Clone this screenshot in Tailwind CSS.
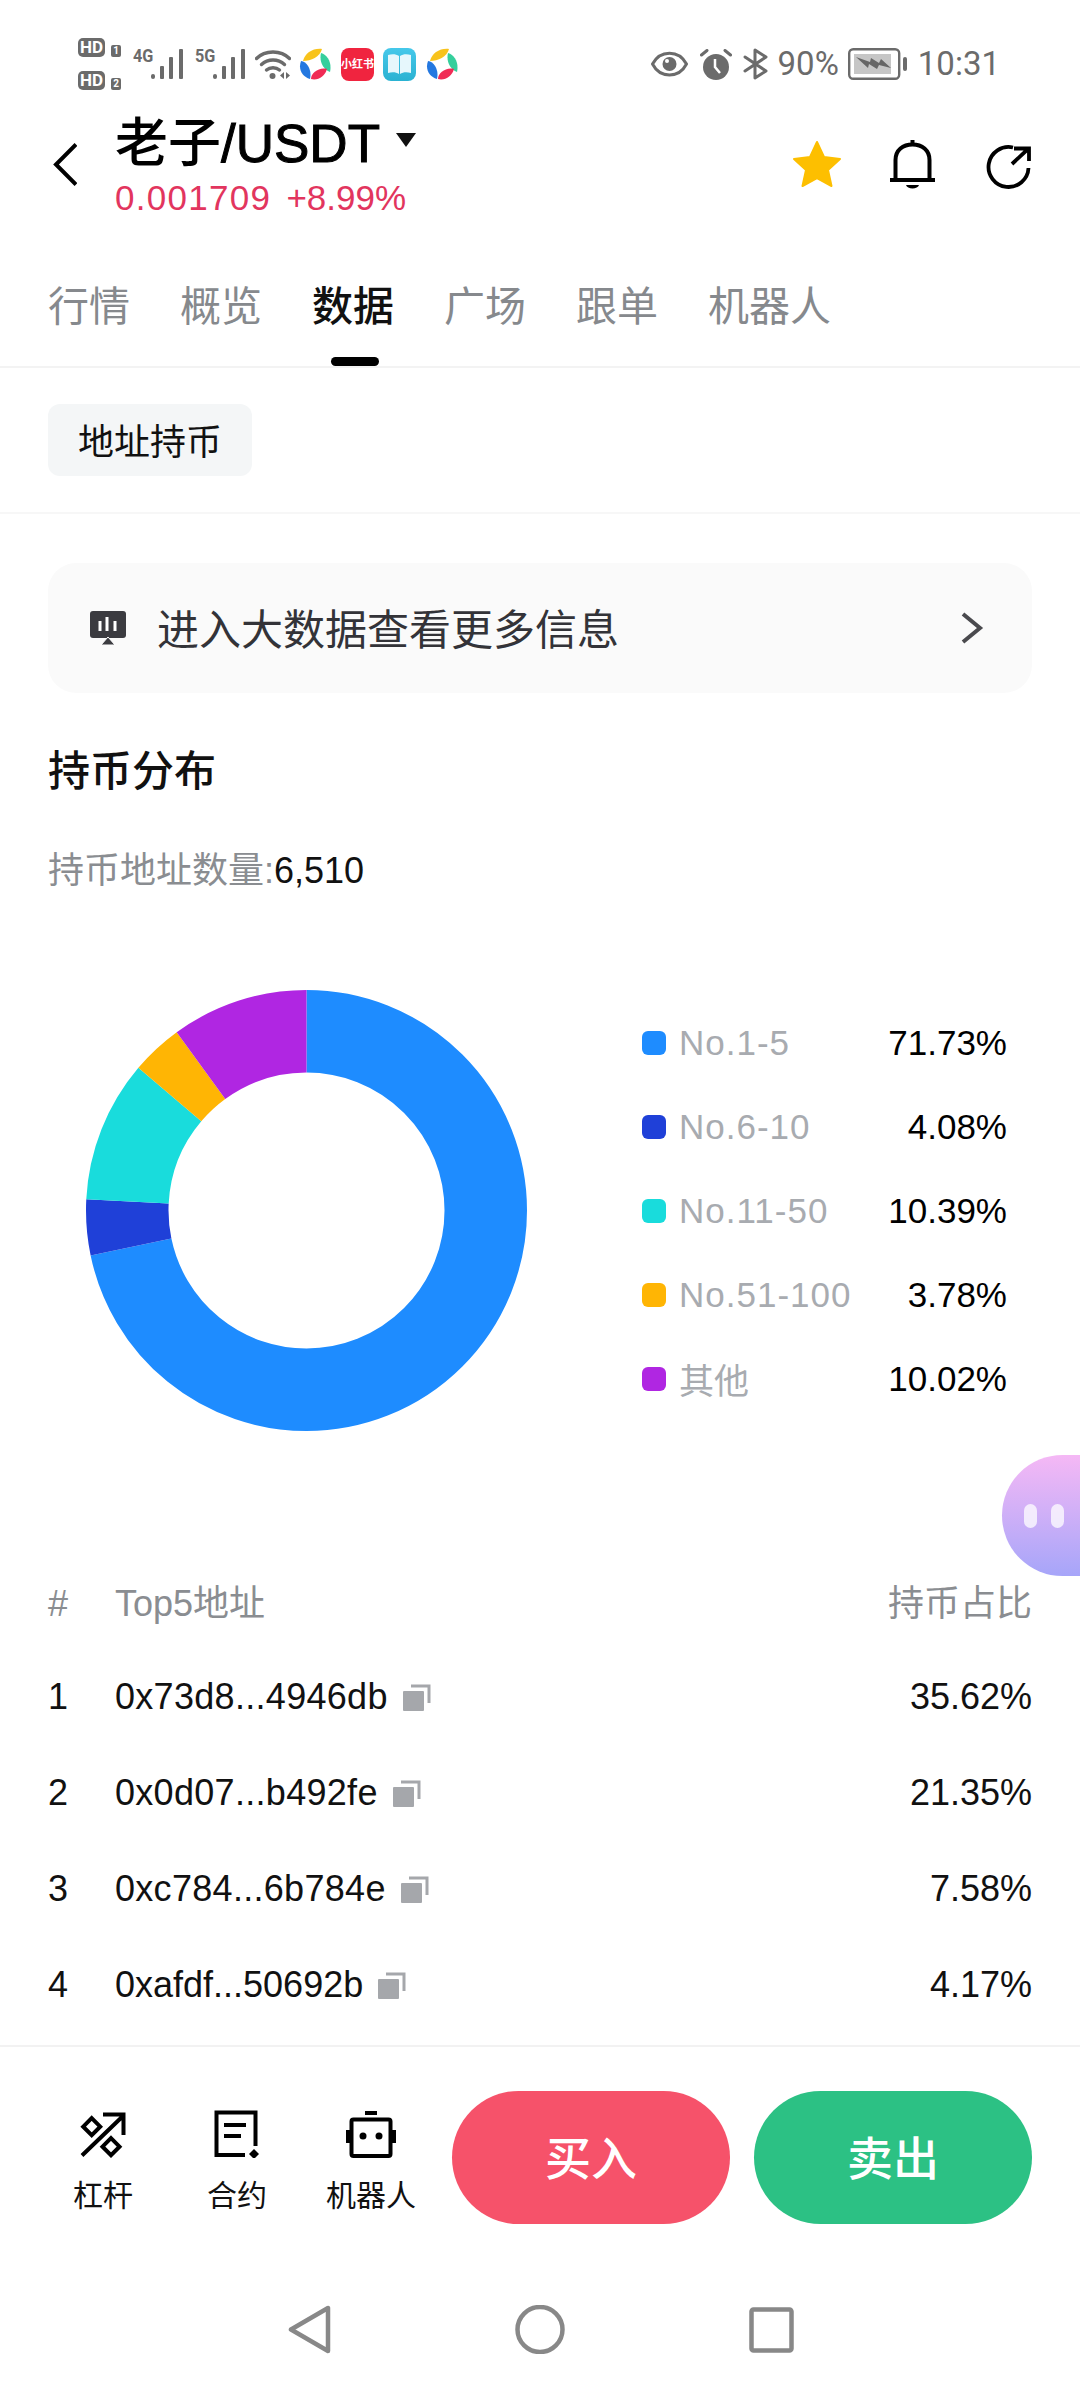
<!DOCTYPE html>
<html lang="zh-CN">
<head>
    <meta charset="UTF-8">
    <meta name="viewport" content="width=device-width, initial-scale=1.0">
    <title>老子/USDT - 数据</title>
    <script src="https://cdn.jsdelivr.net/npm/@tailwindcss/browser@4"></script>
</head>
<body class="bg-white">
<div class="relative w-[1080px] h-[2388px] overflow-hidden bg-white text-black font-['Liberation_Sans','Noto_Sans_CJK_SC',sans-serif]">

    <!-- Status bar -->
    <div class="h-[96px] flex items-center justify-between pl-[78px] pr-[80px] pt-[32px] text-[#6b6b6b]">
        <div class="flex items-center">
            <div class="w-[43px] flex flex-col gap-[14px] font-['Roboto'] font-bold">
                <div class="flex items-end justify-between">
                    <span class="w-[27px] h-[19px] rounded-[5px] bg-[#6b6b6b] text-white text-[17px] leading-[19px] text-center">HD</span>
                    <span class="w-[10px] h-[12px] rounded-[2px] bg-[#6b6b6b] text-white text-[10px] leading-[12px] text-center">1</span>
                </div>
                <div class="flex items-end justify-between">
                    <span class="w-[27px] h-[19px] rounded-[5px] bg-[#6b6b6b] text-white text-[17px] leading-[19px] text-center">HD</span>
                    <span class="w-[10px] h-[12px] rounded-[2px] bg-[#6b6b6b] text-white text-[10px] leading-[12px] text-center">2</span>
                </div>
            </div>
            <div class="ml-[12px] w-[50px] flex items-start">
                <span class="w-[18px] text-[18px] leading-[14px] font-bold font-['Roboto'] scale-x-90 origin-left">4G</span>
                <svg class="w-[32px] h-[30px]" viewBox="0 0 32 30" fill="#6b6b6b"><rect x="0" y="25" width="4" height="5" rx="2"/><rect x="9" y="17" width="4" height="13" rx="1"/><rect x="18" y="8" width="4" height="22" rx="1"/><rect x="28" y="0" width="4" height="30" rx="1"/></svg>
            </div>
            <div class="ml-[12px] w-[50px] flex items-start">
                <span class="w-[18px] text-[18px] leading-[14px] font-bold font-['Roboto'] scale-x-90 origin-left">5G</span>
                <svg class="w-[32px] h-[30px]" viewBox="0 0 32 30" fill="#6b6b6b"><rect x="0" y="25" width="4" height="5" rx="2"/><rect x="9" y="17" width="4" height="13" rx="1"/><rect x="18" y="8" width="4" height="22" rx="1"/><rect x="28" y="0" width="4" height="30" rx="1"/></svg>
            </div>
            <svg class="ml-[10px] w-[36px] h-[30px]" viewBox="0 0 36 30" fill="none" stroke="#6b6b6b" stroke-width="3.4" stroke-linecap="round">
                <path d="M1.5 9.5C10 .8 26 .8 34.5 9.5"/>
                <path d="M6.5 15.5C13 9.5 23 9.5 29.5 15.5"/>
                <path d="M11.5 21C15 18 21 18 24.5 21"/>
                <circle cx="17.500" cy="27" r="3" fill="#6b6b6b" stroke="none"/>
                <path d="M29 23v7l-4-3.500zM31 23v7l4-3.500z" fill="#6b6b6b" stroke="none"/>
            </svg>
            <svg class="ml-[8px] w-[32px] h-[32px]" viewBox="0 0 32 32">
                <path d="M4 13C6 5 14 0 23 1 21 9 12 13 4 13Z" fill="#f8c31c"/>
                <path d="M22 5C29 7 33 15 31 24 24 21 20 13 22 5Z" fill="#35cf9c"/>
                <path d="M28 21C26 28 19 33 12 31 12 25 20 19 28 21Z" fill="#f02c55"/>
                <path d="M2 13C9 14 13 23 11 31 3 29 -1 21 2 13Z" fill="#2478e0"/>
            </svg>
            <div class="ml-[10px] w-[33px] h-[33px] rounded-[8px] bg-[#f0243f] text-white text-[11px] leading-[33px] text-center font-bold whitespace-nowrap">小红书</div>
            <div class="ml-[9px] w-[33px] h-[33px] rounded-[8px] bg-gradient-to-b from-[#45c8ea] to-[#2ab2d2] flex items-center justify-center">
                <svg class="w-[25px] h-[22px]" viewBox="0 0 25 22"><path d="M1 2C5 1 9 1 12 3V21C9 19 5 19 1 20ZM24 2C20 1 16 1 13 3V21C16 19 20 19 24 20Z" fill="#e6f7fc"/></svg>
            </div>
            <svg class="ml-[10px] w-[32px] h-[32px]" viewBox="0 0 32 32">
                <path d="M4 13C6 5 14 0 23 1 21 9 12 13 4 13Z" fill="#f8c31c"/>
                <path d="M22 5C29 7 33 15 31 24 24 21 20 13 22 5Z" fill="#35cf9c"/>
                <path d="M28 21C26 28 19 33 12 31 12 25 20 19 28 21Z" fill="#f02c55"/>
                <path d="M2 13C9 14 13 23 11 31 3 29 -1 21 2 13Z" fill="#2478e0"/>
            </svg>
        </div>
        <div class="flex items-center font-['Roboto'] text-[33px] leading-[36px]">
            <svg class="w-[37px] h-[28px]" viewBox="0 0 37 28" fill="none" stroke="#6b6b6b" stroke-width="3">
                <path d="M1.500 14C9 -.5 28 -.5 35.500 14 28 28.500 9 28.500 1.500 14Z"/>
                <circle cx="18.500" cy="14" r="7" fill="#6b6b6b" stroke="none"/>
                <circle cx="16" cy="11" r="2" fill="#fff" stroke="none"/>
            </svg>
            <svg class="ml-[12px] w-[32px] h-[31px]" viewBox="0 0 32 31">
                <circle cx="16" cy="18" r="13" fill="#6b6b6b"/>
                <path d="M15 10V18L20 24" fill="none" stroke="#fff" stroke-width="2.500"/>
                <path d="M1.500 6L7 1.500M30.500 6L25 1.500" stroke="#6b6b6b" stroke-width="3" stroke-linecap="round"/>
            </svg>
            <svg class="ml-[11px] w-[26px] h-[32px]" viewBox="0 0 26 32" fill="none" stroke="#6b6b6b" stroke-width="3" stroke-linecap="round" stroke-linejoin="round">
                <path d="M2 9L23 23 12 30V2L23 9 2 23"/>
            </svg>
            <span class="ml-[9px]">90%</span>
            <svg class="ml-[9px] w-[59px] h-[32px]" viewBox="0 0 59 32">
                <rect x="1.200" y="1.200" width="50" height="29.600" rx="4" fill="none" stroke="#6b6b6b" stroke-width="2.400"/>
                <rect x="6" y="6" width="37" height="20" fill="#c6c6c6"/>
                <rect x="55" y="9" width="4" height="14" rx="2" fill="#6b6b6b"/>
                <path d="M8 9L22 14 23 10 31 15 33 11 43 20 31 17 29 21 21 16 20 20Z" fill="#666"/>
            </svg>
            <span class="ml-[11px]">10:31</span>
        </div>
    </div>

    <!-- Header -->
    <div class="h-[144px] flex items-start justify-between pl-[53px] pr-[49px] pt-[19px]">
        <div class="flex items-start">
            <svg class="mt-[28px] w-[24px] h-[43px]" viewBox="0 0 24 43" fill="none" stroke="#000" stroke-width="4"><path d="M23 1.500L3 21.500 23 41.500"/></svg>
            <div class="ml-[38px]">
                <div class="flex items-center h-[56px]">
                    <span class="text-[53px] leading-[56px] font-medium pt-[2px]">老子<span class="[-webkit-text-stroke:1px_black]">/USDT</span></span>
                    <svg class="ml-[16px] mt-[-6px] w-[20px] h-[14px]" viewBox="0 0 20 14"><path d="M0 0H20L10 14Z" fill="#111"/></svg>
                </div>
                <div class="mt-[5px] flex gap-[15px] text-[35px] leading-[44px] text-[#e2355e]">
                    <span class="tracking-[1.3px]">0.001709</span>
                    <span>+8.99%</span>
                </div>
            </div>
        </div>
        <div class="mt-[25px] flex items-start">
            <svg class="w-[50px] h-[48px]" viewBox="0 0 50 48"><path d="M25 2L32 17 48 19 36 30 39.500 46 25 38 10.500 46 14 30 2 19 18 17Z" fill="#fdbf00" stroke="#fdbf00" stroke-width="2" stroke-linejoin="round"/></svg>
            <svg class="ml-[48px] w-[45px] h-[50px]" viewBox="0 0 45 50" fill="none" stroke="#000" stroke-width="4">
                <path d="M0 40H45"/>
                <path d="M5.500 40V20C5.500 10 13 4.500 22.500 4.500S39.500 10 39.500 20V40"/>
                <rect x="20.500" y="0" width="4" height="4" fill="#000" stroke="none"/>
                <path d="M16 45H29C28 49.500 17 49.500 16 45Z" fill="#000" stroke="none"/>
            </svg>
            <svg class="ml-[51px] mt-[5px] w-[45px] h-[44px]" viewBox="0 0 45 44" fill="none" stroke="#000" stroke-width="3.800">
                <path d="M27 2.500A20 20 0 1 0 42.500 23"/>
                <path d="M26 19L42 4M28 3.500H43V16"/>
            </svg>
        </div>
    </div>

    <!-- Tabs -->
    <div class="relative h-[128px] border-b-2 border-[#f3f3f3] pt-[39px] px-[48px] flex gap-[50px] text-[41px] leading-[56px] text-[#86898d]">
        <span>行情</span>
        <span>概览</span>
        <span class="relative text-[#111] font-medium">数据
            <span class="absolute left-[19px] top-[78px] w-[48px] h-[9px] rounded-full bg-black"></span>
        </span>
        <span>广场</span>
        <span>跟单</span>
        <span>机器人</span>
    </div>

    <!-- Sub tab -->
    <div class="h-[146px] border-b-2 border-[#f7f7f7] pt-[36px] px-[48px]">
        <div class="w-[204px] h-[72px] pt-[5px] rounded-[12px] bg-[#f4f6f7] flex items-center justify-center text-[36px] text-[#111]">地址持币</div>
    </div>

    <!-- Big data link -->
    <div class="mx-[48px] mt-[49px] h-[130px] rounded-[28px] bg-[#fafafa] flex items-center pl-[42px] pr-[48px]">
        <svg class="w-[36px] h-[34px]" viewBox="0 0 36 34">
            <rect width="36" height="27" rx="3" fill="#3b3b40"/>
            <path d="M10 10V20M17 6V20M25 10V20" stroke="#fff" stroke-width="3"/>
            <path d="M18 26L25 34H11Z" fill="#3b3b40" stroke="#fff" stroke-width="1"/>
        </svg>
        <span class="ml-[31px] pt-[5px] text-[42px] text-[#333338]">进入大数据查看更多信息</span>
        <svg class="ml-auto w-[24px] h-[32px]" viewBox="0 0 24 32" fill="none" stroke="#4a4a4e" stroke-width="4"><path d="M3 2L20 16 3 30"/></svg>
    </div>

    <!-- Distribution -->
    <h2 class="mt-[51px] ml-[48px] text-[42px] leading-[56px] font-medium text-[#111]">持币分布</h2>
    <p class="mt-[49px] ml-[48px] text-[36px] leading-[44px] text-[#8a8d91]">持币地址数量:<span class="text-[#111]">6,510</span></p>

    <!-- Chart and legend -->
    <div class="mt-[97px] pl-[86px] flex items-center">
        <svg class="w-[441px] h-[441px] -rotate-90" viewBox="0 0 441 441" fill="none" stroke-width="82.500">
            <circle cx="220.500" cy="220.500" r="179.250" pathLength="100" stroke="#1e8cff" stroke-dasharray="71.73 28.27" stroke-dashoffset="0"/>
            <circle cx="220.500" cy="220.500" r="179.250" pathLength="100" stroke="#1f40d8" stroke-dasharray="4.08 95.92" stroke-dashoffset="-71.73"/>
            <circle cx="220.500" cy="220.500" r="179.250" pathLength="100" stroke="#19dcdc" stroke-dasharray="10.39 89.61" stroke-dashoffset="-75.81"/>
            <circle cx="220.500" cy="220.500" r="179.250" pathLength="100" stroke="#ffb504" stroke-dasharray="3.78 96.22" stroke-dashoffset="-86.2"/>
            <circle cx="220.500" cy="220.500" r="179.250" pathLength="100" stroke="#b026e2" stroke-dasharray="10.02 89.98" stroke-dashoffset="-89.98"/>
        </svg>
        <div class="ml-[115px] w-[365px] text-[35px] leading-[84px]">
            <div class="flex items-center"><span class="w-[24px] h-[24px] rounded-[6px] bg-[#1e8cff]"></span><span class="ml-[13px] tracking-[1px] text-[#a8abb0]">No.1-5</span><span class="ml-auto text-black">71.73%</span></div>
            <div class="flex items-center"><span class="w-[24px] h-[24px] rounded-[6px] bg-[#1f40d8]"></span><span class="ml-[13px] tracking-[1px] text-[#a8abb0]">No.6-10</span><span class="ml-auto text-black">4.08%</span></div>
            <div class="flex items-center"><span class="w-[24px] h-[24px] rounded-[6px] bg-[#19dcdc]"></span><span class="ml-[13px] tracking-[1px] text-[#a8abb0]">No.11-50</span><span class="ml-auto text-black">10.39%</span></div>
            <div class="flex items-center"><span class="w-[24px] h-[24px] rounded-[6px] bg-[#ffb504]"></span><span class="ml-[13px] tracking-[1px] text-[#a8abb0]">No.51-100</span><span class="ml-auto text-black">3.78%</span></div>
            <div class="flex items-center"><span class="w-[24px] h-[24px] rounded-[6px] bg-[#b026e2]"></span><span class="ml-[13px] translate-y-[3px] text-[#a8abb0]">其他</span><span class="ml-auto text-black">10.02%</span></div>
        </div>
    </div>

    <!-- Top holders -->
    <div class="mt-[151px] mx-[48px] flex text-[36px] leading-[44px] text-[#8a8d91]">
        <span class="w-[67px]">#</span>
        <span>Top5地址</span>
        <span class="ml-auto">持币占比</span>
    </div>
    <div class="mt-[23px] mx-[48px] text-[36px] leading-[96px] text-[#111]">
        <div class="flex items-center">
            <span class="w-[67px]">1</span><span class="tracking-[0.3px]">0x73d8...4946db</span>
            <svg class="ml-[15px] w-[28px] h-[27px]" viewBox="0 0 28 27"><rect y="7" width="21" height="20" rx="1" fill="#a5a7ab"/><path d="M8 2H26V19" fill="none" stroke="#a5a7ab" stroke-width="3"/></svg>
            <span class="ml-auto">35.62%</span>
        </div>
        <div class="flex items-center">
            <span class="w-[67px]">2</span><span class="tracking-[0.3px]">0x0d07...b492fe</span>
            <svg class="ml-[15px] w-[28px] h-[27px]" viewBox="0 0 28 27"><rect y="7" width="21" height="20" rx="1" fill="#a5a7ab"/><path d="M8 2H26V19" fill="none" stroke="#a5a7ab" stroke-width="3"/></svg>
            <span class="ml-auto">21.35%</span>
        </div>
        <div class="flex items-center">
            <span class="w-[67px]">3</span><span class="tracking-[0.3px]">0xc784...6b784e</span>
            <svg class="ml-[15px] w-[28px] h-[27px]" viewBox="0 0 28 27"><rect y="7" width="21" height="20" rx="1" fill="#a5a7ab"/><path d="M8 2H26V19" fill="none" stroke="#a5a7ab" stroke-width="3"/></svg>
            <span class="ml-auto">7.58%</span>
        </div>
        <div class="flex items-center">
            <span class="w-[67px]">4</span><span>0xafdf...50692b</span>
            <svg class="ml-[15px] w-[28px] h-[27px]" viewBox="0 0 28 27"><rect y="7" width="21" height="20" rx="1" fill="#a5a7ab"/><path d="M8 2H26V19" fill="none" stroke="#a5a7ab" stroke-width="3"/></svg>
            <span class="ml-auto">4.17%</span>
        </div>
    </div>

    <!-- Action bar -->
    <div class="mt-[12px] h-[223px] border-t-2 border-[#f2f2f2] flex items-center pl-[36px] pr-[48px]">
        <div class="w-[134px] h-[133px] pt-[19px] flex flex-col items-center text-[30px] leading-[36px] text-[#111]">
            <svg class="w-[46px] h-[48px]" viewBox="0 0 46 48" fill="none" stroke="#000" stroke-width="4">
                <path d="M2 45.500L43 6M23 4.500H43.500V25"/>
                <path d="M11.700 8.200L20.200 16.700 11.700 25.200 3.200 16.700ZM31 28.200L39.500 36.700 31 45.200 22.500 36.700Z"/>
            </svg>
            <span class="mt-[20px]">杠杆</span>
        </div>
        <div class="w-[134px] h-[133px] pt-[19px] flex flex-col items-center text-[30px] leading-[36px] text-[#111]">
            <svg class="w-[46px] h-[48px]" viewBox="0 0 46 48" fill="none" stroke="#000" stroke-width="4">
                <path d="M31 45H2.500V2.500H41.500V36"/>
                <path d="M10 15H32M10 26H27"/>
                <path d="M40 39L45 44 40 49 35 44Z" fill="#000" stroke="none"/>
            </svg>
            <span class="mt-[20px]">合约</span>
        </div>
        <div class="w-[134px] h-[133px] pt-[19px] flex flex-col items-center text-[30px] leading-[36px] text-[#111]">
            <svg class="w-[50px] h-[48px]" viewBox="0 0 50 48" fill="#000">
                <rect x="5.500" y="9.500" width="39" height="36.500" rx="2" fill="none" stroke="#000" stroke-width="4"/>
                <rect x="19" y="1" width="12" height="4"/>
                <rect x="0" y="20" width="4" height="13"/>
                <rect x="46" y="20" width="4" height="13"/>
                <circle cx="17" cy="26" r="3.500"/>
                <circle cx="33" cy="26" r="3.500"/>
            </svg>
            <span class="mt-[20px]">机器人</span>
        </div>
        <button class="ml-[14px] pt-[3px] w-[278px] h-[133px] rounded-full bg-[#f6526a] text-white text-[46px] font-medium">买入</button>
        <button class="ml-[24px] pt-[3px] w-[278px] h-[133px] rounded-full bg-[#2cc184] text-white text-[46px] font-medium">卖出</button>
    </div>

    <!-- Navigation bar -->
    <div class="pt-[37px] flex justify-center">
        <div class="w-[231px] flex justify-center">
            <svg class="w-[43px] h-[49px]" viewBox="0 0 43 49" fill="none" stroke="#888" stroke-width="4.500" stroke-linejoin="round"><path d="M40 3V46L3 24.500Z"/></svg>
        </div>
        <div class="w-[231px] flex justify-center">
            <svg class="w-[50px] h-[49px]" viewBox="0 0 50 49" fill="none" stroke="#888" stroke-width="4.500"><circle cx="25" cy="24.500" r="22.500"/></svg>
        </div>
        <div class="w-[231px] flex justify-center">
            <svg class="mt-[2px] w-[45px] h-[46px]" viewBox="0 0 45 46" fill="none" stroke="#888" stroke-width="4.500"><rect x="2.500" y="2.500" width="40" height="41" rx="2"/></svg>
        </div>
    </div>

    <!-- Floating assistant -->
    <div class="absolute left-[1002px] top-[1455px] w-[78px] h-[121px] rounded-l-full bg-gradient-to-b from-[#f5b8f5] to-[#a6a5f9] flex items-center gap-[14px] pl-[22px]">
        <span class="w-[13px] h-[24px] rounded-full bg-white/75"></span>
        <span class="w-[13px] h-[24px] rounded-full bg-white/75"></span>
    </div>
</div>
</body>
</html>
